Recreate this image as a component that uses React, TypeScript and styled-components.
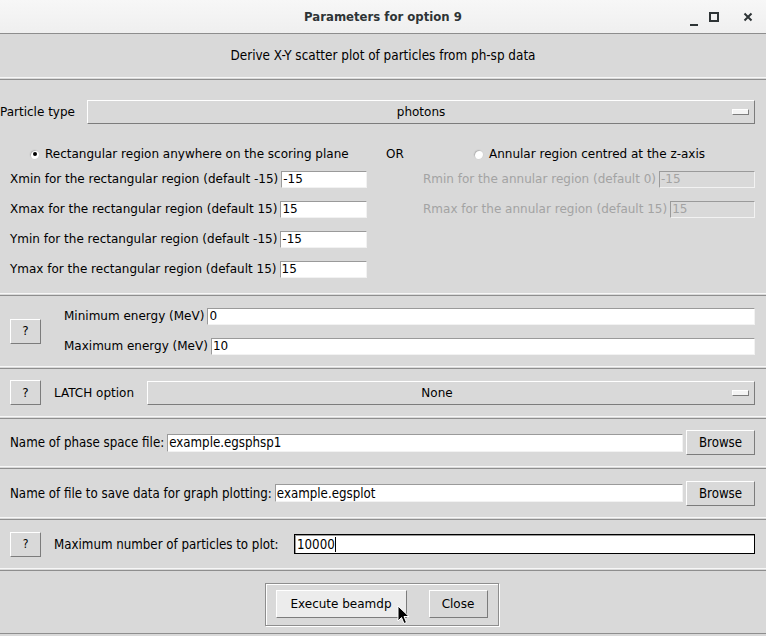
import React from 'react';
import styled, { createGlobalStyle, css } from 'styled-components';

const GlobalStyle = createGlobalStyle`
  html, body {
    margin: 0;
    padding: 0;
    background: #d9d9d9;
  }
  body {
    font-family: "DejaVu Sans", "Liberation Sans", sans-serif;
    font-size: 12px;
    color: #000;
  }
`;

const condensed = css`
  font-family: "DejaVu Sans Condensed", "DejaVu Sans", sans-serif;
  font-stretch: condensed;
  font-size: 13.2px;
`;

const Window = styled.div`
  position: relative;
  width: 766px;
  height: 636px;
  overflow: hidden;
  display: flex;
  flex-direction: column;
  background: #d9d9d9;
`;

/* ---------- Title bar ---------- */
const TitleBar = styled.div`
  height: 33px;
  flex: none;
  display: grid;
  grid-template-columns: 1fr auto 1fr;
  align-items: center;
  background: linear-gradient(#f7f7f7, #efefef);
  border-bottom: 1px solid #8d8d8d;
`;

const Title = styled.div`
  grid-column: 2;
  ${condensed};
  font-weight: bold;
  font-size: 13px;
  color: #2e3436;
`;

const Controls = styled.div`
  grid-column: 3;
  justify-self: end;
  display: flex;
  align-items: center;
  padding-right: 8px;
`;

const ControlIcon = styled.svg<{ $ml?: number }>`
  width: 20px;
  height: 22px;
  margin-left: ${(p) => p.$ml ?? 0}px;
`;

/* ---------- Sections ---------- */
const Separator = styled.div`
  flex: none;
  height: 1px;
  border-top: 1px solid #f7f7f7;
  border-bottom: 1px solid #8e8e8e;
  background: #d9d9d9;
`;

const Header = styled.div`
  height: 43px;
  flex: none;
  display: flex;
  align-items: center;
  justify-content: center;
  ${condensed};
  font-size: 13.4px;
`;

const Section = styled.div<{ $h: number; $pl?: number }>`
  height: ${(p) => p.$h}px;
  flex: none;
  display: flex;
  align-items: center;
  padding: 0 11px 0 ${(p) => p.$pl ?? 10}px;
  box-sizing: border-box;
`;

const ParticleSection = styled.div`
  height: 213px;
  flex: none;
  display: flex;
  flex-direction: column;
  padding-top: 20px;
  box-sizing: border-box;
`;

const TypeRow = styled.div`
  display: flex;
  align-items: center;
  padding-right: 11px;
`;

const TypeLabel = styled.span`
  width: 87px;
  flex: none;
`;

const RadioRow = styled.div`
  margin-top: 21px;
  height: 18px;
  display: grid;
  grid-template-columns: 386px 88px 1fr;
  align-items: center;
`;

const RadioOption = styled.label<{ $indent?: number }>`
  display: flex;
  align-items: center;
  gap: 6px;
  padding-left: ${(p) => p.$indent ?? 0}px;
`;

const RadioDot = styled.span<{ $on?: boolean }>`
  width: 9px;
  height: 9px;
  border-radius: 50%;
  background: #fff;
  box-shadow: inset 1px 1px 0 #b9b9b9, 0 0 0 0.5px #cfcfcf;
  display: flex;
  align-items: center;
  justify-content: center;
  &::after {
    content: '';
    width: 4px;
    height: 4px;
    border-radius: 50%;
    background: ${(p) => (p.$on ? '#000' : 'transparent')};
  }
`;

const Or = styled.span`
  font-size: 12px;
`;

const FieldsGrid = styled.div`
  margin-top: 1px;
  display: grid;
  grid-template-columns: 357px 1fr;
  column-gap: 56px;
  padding: 0 11px 0 10px;
  align-items: start;
`;

const FieldColumn = styled.div`
  display: flex;
  flex-direction: column;
`;

const FieldRow = styled.div<{ $gap?: number }>`
  height: 30px;
  display: flex;
  align-items: center;
  gap: ${(p) => p.$gap ?? 3}px;
`;

const Label = styled.span<{ $disabled?: boolean; $cond?: boolean; $w?: number; $ml?: number }>`
  flex: none;
  white-space: nowrap;
  color: ${(p) => (p.$disabled ? '#a3a3a3' : '#000')};
  ${(p) => p.$w && `width: ${p.$w}px;`}
  ${(p) => p.$ml && `margin-left: ${p.$ml}px;`}
  ${(p) => p.$cond && condensed};
`;

const Entry = styled.div<{ $disabled?: boolean; $focus?: boolean; $h?: number; $cond?: boolean }>`
  flex: 1;
  min-width: 0;
  height: ${(p) => p.$h ?? 17}px;
  box-sizing: border-box;
  padding-left: 1px;
  display: flex;
  align-items: center;
  white-space: nowrap;
  overflow: hidden;
  background: ${(p) => (p.$disabled ? '#d9d9d9' : '#fff')};
  color: ${(p) => (p.$disabled ? '#a3a3a3' : '#000')};
  border-top: 1px solid #9a9a9a;
  border-left: 1px solid #9a9a9a;
  border-right: 1px solid #f2f2f2;
  border-bottom: 1px solid #f2f2f2;
  ${(p) => p.$cond && condensed};
  ${(p) =>
    p.$focus &&
    css`
      border: 1px solid #000;
      box-shadow: inset 1px 1px 0 #9a9a9a;
      padding-left: 2px;
    `}
`;

const Caret = styled.span`
  display: inline-block;
  width: 1px;
  height: 15px;
  background: #000;
`;

const raised = css`
  border-top: 1px solid #fff;
  border-left: 1px solid #fff;
  border-right: 1px solid #7c7c7c;
  border-bottom: 1px solid #7c7c7c;
`;

const MenuButton = styled.div<{ $h?: number }>`
  flex: 1;
  height: ${(p) => p.$h ?? 24}px;
  box-sizing: border-box;
  ${raised};
  display: grid;
  grid-template-columns: 1fr auto;
  align-items: center;
  background: #d9d9d9;
`;

const MenuText = styled.span<{ $pr?: number }>`
  grid-column: 1 / span 2;
  grid-row: 1;
  justify-self: center;
  padding-right: ${(p) => p.$pr ?? 0}px;
`;

const Indicator = styled.span`
  grid-column: 2;
  grid-row: 1;
  width: 15px;
  height: 4px;
  margin-right: 5px;
  background: #f4f4f4;
  ${raised};
`;

const Button = styled.div<{ $w: number; $h?: number; $active?: boolean; $cond?: boolean }>`
  width: ${(p) => p.$w}px;
  height: ${(p) => p.$h ?? 25}px;
  flex: none;
  box-sizing: border-box;
  ${raised};
  display: flex;
  align-items: center;
  justify-content: center;
  background: ${(p) => (p.$active ? '#ececec' : '#d9d9d9')};
  ${(p) => p.$cond && condensed};
`;

const HelpButton = styled(Button).attrs({ $w: 31 })`
  font-size: 12px;
`;

const EnergyFields = styled.div`
  flex: 1;
  margin-left: 23px;
  display: flex;
  flex-direction: column;
`;

const Footer = styled.div`
  flex: 1;
  display: flex;
  justify-content: center;
  align-items: flex-start;
  padding-top: 12px;
  border-bottom: 1px solid #8e8e8e;
  margin-bottom: 2px;
`;

const ButtonFrame = styled.div`
  display: flex;
  gap: 22px;
  padding: 6px 10px 7px 10px;
  border: 1px solid #8e8e8e;
  box-shadow: inset 1px 1px 0 #fff, 1px 1px 0 #fff;
  margin-right: 3px;
`;

const Pointer = styled.svg`
  position: absolute;
  left: 397px;
  top: 605px;
  width: 13px;
  height: 20px;
`;

function Radio({ on, children, indent }: { on?: boolean; children: React.ReactNode; indent?: number }) {
  return (
    <RadioOption $indent={indent}>
      <RadioDot $on={on} />
      <span>{children}</span>
    </RadioOption>
  );
}

export default function App() {
  const rectFields = [
    ['Xmin for the rectangular region (default -15)', '-15'],
    ['Xmax for the rectangular region (default 15)', '15'],
    ['Ymin for the rectangular region (default -15)', '-15'],
    ['Ymax for the rectangular region (default 15)', '15'],
  ];
  const annularFields = [
    ['Rmin for the annular region (default 0)', '-15'],
    ['Rmax for the annular region (default 15)', '15'],
  ];

  return (
    <Window>
      <GlobalStyle />
      <TitleBar>
        <Title>Parameters for option 9</Title>
        <Controls>
          <ControlIcon viewBox="0 0 20 22">
            <rect x="6" y="18" width="8" height="2" fill="#2e3436" />
          </ControlIcon>
          <ControlIcon viewBox="0 0 20 22">
            <rect x="6" y="7" width="8" height="8" fill="none" stroke="#2e3436" strokeWidth="2" />
          </ControlIcon>
          <ControlIcon viewBox="0 0 20 22" $ml={14}>
            <path d="M6.5 7.5 L13.5 14.5 M13.5 7.5 L6.5 14.5" stroke="#2e3436" strokeWidth="2" />
          </ControlIcon>
        </Controls>
      </TitleBar>

      <Header>Derive X-Y scatter plot of particles from ph-sp data</Header>
      <Separator />

      {/*------------ Particle type and region -----------*/}
      <ParticleSection>
        <TypeRow>
          <TypeLabel>Particle type</TypeLabel>
          <MenuButton>
            <MenuText>photons</MenuText>
            <Indicator />
          </MenuButton>
        </TypeRow>

        <RadioRow>
          <Radio on indent={30}>Rectangular region anywhere on the scoring plane</Radio>
          <Or>OR</Or>
          <Radio>Annular region centred at the z-axis</Radio>
        </RadioRow>

        <FieldsGrid>
          <FieldColumn>
            {rectFields.map(([label, value]) => (
              <FieldRow key={label}>
                <Label>{label}</Label>
                <Entry>{value}</Entry>
              </FieldRow>
            ))}
          </FieldColumn>
          <FieldColumn>
            {annularFields.map(([label, value]) => (
              <FieldRow key={label}>
                <Label $disabled>{label}</Label>
                <Entry $disabled>{value}</Entry>
              </FieldRow>
            ))}
          </FieldColumn>
        </FieldsGrid>
      </ParticleSection>
      <Separator />

      {/*------------ Energy range -----------*/}
      <Section $h={70}>
        <HelpButton>?</HelpButton>
        <EnergyFields>
          <FieldRow>
            <Label>Minimum energy (MeV)</Label>
            <Entry>0</Entry>
          </FieldRow>
          <FieldRow>
            <Label>Maximum energy (MeV)</Label>
            <Entry>10</Entry>
          </FieldRow>
        </EnergyFields>
      </Section>
      <Separator />

      {/*------------ LATCH -----------*/}
      <Section $h={47}>
        <HelpButton>?</HelpButton>
        <Label $ml={13} $w={93}>LATCH option</Label>
        <MenuButton>
          <MenuText $pr={28}>None</MenuText>
          <Indicator />
        </MenuButton>
      </Section>
      <Separator />

      {/*------------ Phase space file -----------*/}
      <Section $h={47}>
        <FieldRow style={{ flex: 1 }}>
          <Label $cond>Name of phase space file:</Label>
          <Entry $cond $h={18}>example.egsphsp1</Entry>
          <Button $w={69} $h={25} $cond>Browse</Button>
        </FieldRow>
      </Section>
      <Separator />

      {/*------------ Graph file -----------*/}
      <Section $h={48}>
        <FieldRow style={{ flex: 1 }}>
          <Label $cond>Name of file to save data for graph plotting:</Label>
          <Entry $cond $h={18}>example.egsplot</Entry>
          <Button $w={69} $h={25} $cond>Browse</Button>
        </FieldRow>
      </Section>
      <Separator />

      {/*------------ Max particles -----------*/}
      <Section $h={48}>
        <HelpButton $cond>?</HelpButton>
        <Label $cond $ml={13} $w={240}>Maximum number of particles to plot:</Label>
        <Entry $cond $focus $h={20}>
          10000
          <Caret />
        </Entry>
      </Section>
      <Separator />

      <Footer>
        <ButtonFrame>
          <Button $w={131} $h={28} $active>Execute beamdp</Button>
          <Button $w={59} $h={28}>Close</Button>
        </ButtonFrame>
      </Footer>

      <Pointer viewBox="0 0 13 20">
        <path d="M1 1 L1 16 L4.5 12.5 L7 18.5 L9.5 17.5 L7 11.5 L12 11.5 Z" fill="#000" stroke="#fff" strokeWidth="1" />
      </Pointer>
    </Window>
  );
}
